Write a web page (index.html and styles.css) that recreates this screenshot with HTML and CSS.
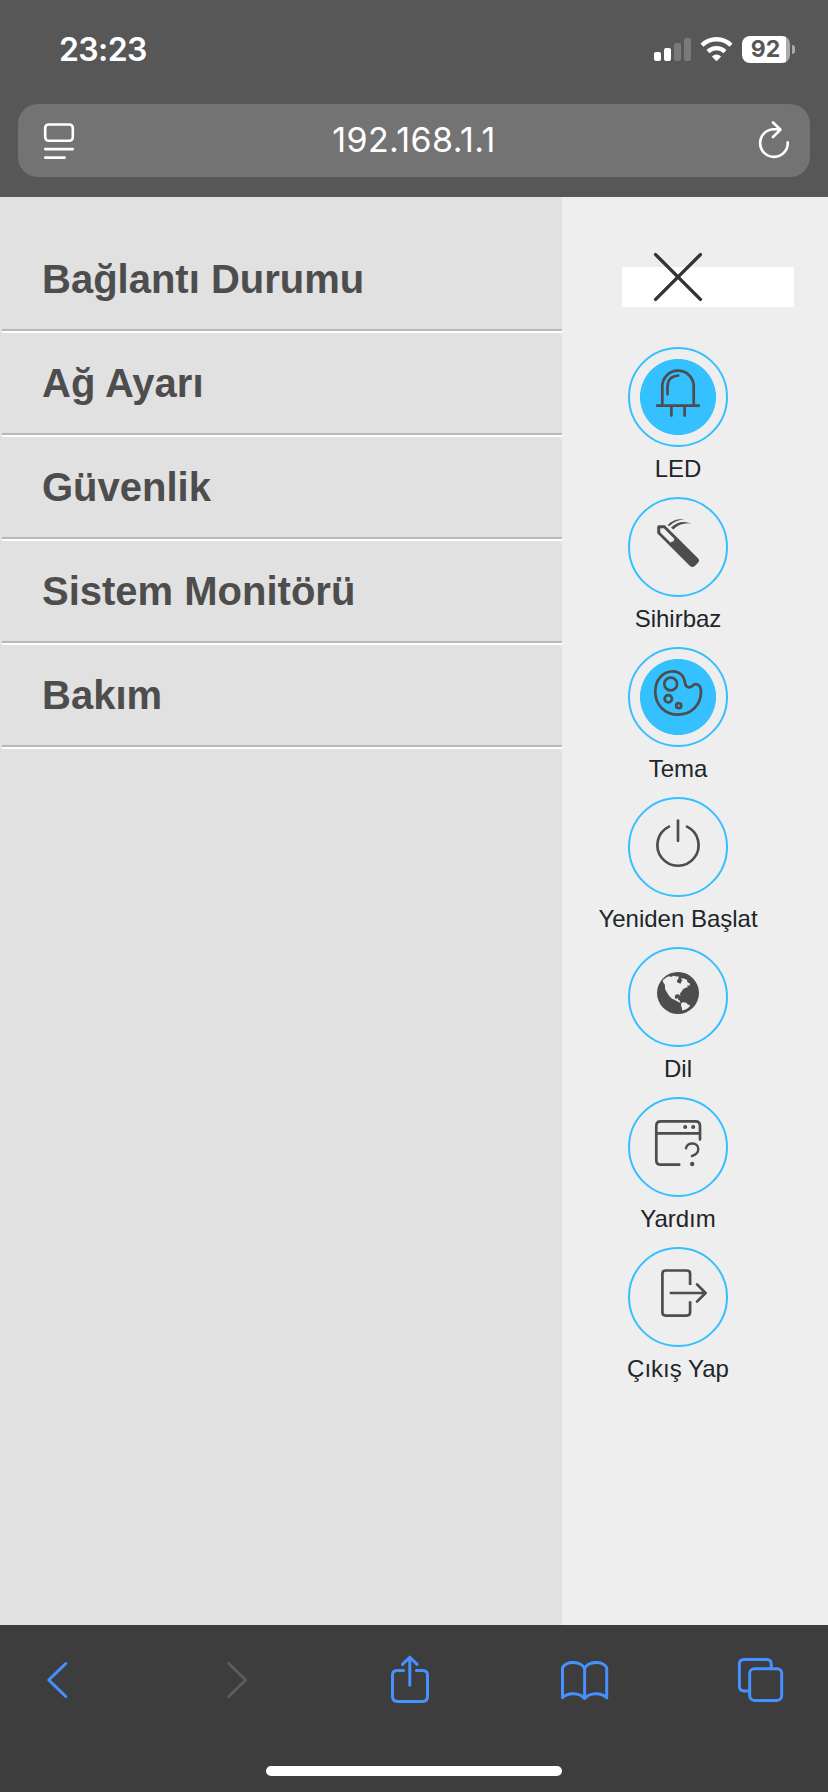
FILE: index.html
```
<!DOCTYPE html>
<html lang="tr">
<head>
    <meta charset="UTF-8">
    <title>192.168.1.1</title>
    <meta name="viewport" content="width=device-width, initial-scale=1">
    <link rel="stylesheet" href="styles.css">
</head>
<body>
<header class="browser-top">
    <div class="status-bar">
        <span class="clock">23:23</span>
        <div class="status-icons">
            <svg class="signal" viewBox="0 0 37 23">
                <rect x="0" y="14" width="7" height="9" rx="2"/>
                <rect x="10" y="10" width="7" height="13" rx="2"/>
                <rect class="weak" x="20" y="5" width="7" height="18" rx="2"/>
                <rect class="weak" x="30" y="0" width="7" height="23" rx="2"/>
            </svg>
            <svg class="wifi" viewBox="0 0 33 25">
                <path class="wave" d="M2 8.2A20.6 20.6 0 0 1 31 8.2"/>
                <path class="wave" d="M8 14.6A12.2 12.2 0 0 1 25 14.6"/>
                <path d="M11.8 19.6Q16.5 15.2 21.2 19.6L17.3 23.6Q16.5 24.4 15.7 23.6Z"/>
            </svg>
            <div class="battery"><span>92</span></div>
        </div>
    </div>
    <div class="url-bar">
        <svg class="reader" viewBox="0 0 30 42">
            <rect x="1.2" y="5.5" width="27.6" height="16.3" rx="3.5"/>
            <path d="M1.2 30.1h27.6M1.2 38.6h19.4"/>
        </svg>
        <span class="url">192.168.1.1</span>
        <svg class="reload" viewBox="0 0 30 42">
            <path d="M28.7 23.3A13.8 13.8 0 1 1 14.9 10.3H20.8M14 3.5L21.5 10.6L14 18"/>
        </svg>
    </div>
</header>

<main class="page">
    <nav class="menu">
        <a class="menu-item">Bağlantı Durumu</a>
        <a class="menu-item">Ağ Ayarı</a>
        <a class="menu-item">Güvenlik</a>
        <a class="menu-item">Sistem Monitörü</a>
        <a class="menu-item">Bakım</a>
    </nav>

    <aside class="side">
        <div class="close">
            <svg viewBox="0 0 50 50"><path d="M2.6 2.6L47.4 47.4M47.4 2.6L2.6 47.4"/></svg>
        </div>
        <div class="tool on">
            <div class="ring">
                <svg viewBox="2 2 96 96">
                    <path d="M34.3 58V39.3a15.7 15.7 0 0 1 31.4 0V58M29.2 58.7h41.6M43.4 59v9.6M56.6 59v9.6M39.5 47.3V40.5Q39.5 29.2 50.2 28.5"/>
                </svg>
            </div>
            <span>LED</span>
        </div>
        <div class="tool">
            <div class="ring">
                <svg viewBox="2 2 96 96">
                    <path class="solid" fill-rule="evenodd" d="M31 28.2H36.8L70 61.3Q72 63.5 70 65.7L66.8 69Q64.3 71 62 69L29.2 36.2V30.2Q29.2 28.2 31 28.2ZM32.3 31.3V35.5L42.7 45.7L43.9 44.6L45.4 44.8L45.6 43.2L46.5 42L35.8 31.3Z"/>
                    <path class="solid" d="M39.5 28.2Q46.5 21 56.5 22.6Q47.5 23 41.5 29Z"/>
                    <path class="solid" d="M43 30.5Q51.5 21.8 63.7 26.6Q52.5 25.2 45.3 32.5Z"/>
                </svg>
            </div>
            <span>Sihirbaz</span>
        </div>
        <div class="tool on">
            <div class="ring">
                <svg viewBox="2 2 96 96">
                    <path d="M45 24.3C34.5 24.3 27.3 33.2 27.3 44.7C27.3 58 37 67.7 50 67.7C63.5 67.7 73 57.5 73 45C73 37 67.6 35.9 64.5 38.7C61 41.8 57.6 40.2 57 35.8C56 29 51.5 24.3 45 24.3Z"/>
                    <circle cx="42.7" cy="37" r="6.4"/>
                    <circle cx="40.3" cy="51.8" r="3.7"/>
                    <circle cx="50.7" cy="58.7" r="2.5"/>
                </svg>
            </div>
            <span>Tema</span>
        </div>
        <div class="tool">
            <div class="ring">
                <svg viewBox="2 2 96 96">
                    <path d="M41 29.6A20.6 20.6 0 1 0 59 29.6M50 23.5V43.8"/>
                </svg>
            </div>
            <span>Yeniden Başlat</span>
        </div>
        <div class="tool">
            <div class="ring">
                <svg viewBox="2 2 96 96">
                    <circle class="solid" cx="50" cy="46" r="21"/>
                    <path class="land" d="M34.7 33.2L39 30L41.5 29.2L43 30L45.5 28.8L48.4 29.4L50.6 29.2L50.4 31.8L48.8 33.6L49.4 35.4L52.6 36.8L53.4 34.6L54.5 33.6L52.6 31.6L55.6 31.6L58.8 32.8L59.5 35.2L62.2 36.8L61.4 38.6L58.8 38.4L60 40L57 41L55 42.2L53.6 44.5L52 46.4L52.4 48.8L50.5 47.3L48 47.4L46.8 49L47 51.2L48.6 52L50.3 50.8L50 52.8L51.6 53.6L52.6 56L49.5 54.6L46 52.4L44 51.8L41.2 49L39.3 46L37.2 42.5L36.8 37.4L35.2 35.4Z"/>
                    <path class="land" d="M53.4 56L55 55.2L58.3 55.8L59.4 57.2L62.2 58.6L60.2 61L57 62.8L54.2 63.5L53.8 60.6L52.9 58.4Z"/>
                </svg>
            </div>
            <span>Dil</span>
        </div>
        <div class="tool">
            <div class="ring">
                <svg viewBox="2 2 96 96">
                    <path d="M72 42.4V28.8Q72 24.3 67.5 24.3H32.8Q28.3 24.3 28.3 28.8V63.2Q28.3 67.7 32.8 67.7H51.2M28.3 36.3H72"/>
                    <path class="mark" d="M58 51.3C59 44.6 70.3 44.8 70.3 52C70.3 56.3 67 58 64 59"/>
                    <circle class="solid" cx="57.2" cy="30" r="2"/>
                    <circle class="solid" cx="65.2" cy="30" r="2"/>
                    <circle class="solid" cx="64.2" cy="67" r="2.2"/>
                </svg>
            </div>
            <span>Yardım</span>
        </div>
        <div class="tool">
            <div class="ring">
                <svg viewBox="2 2 96 96">
                    <path class="door" d="M62.1 38V26.8Q62.1 23.5 58.8 23.5H37.7Q34.4 23.5 34.4 26.8V65.3Q34.4 68.6 37.7 68.6H58.8Q62.1 68.6 62.1 65.3V54.2"/>
                    <path d="M42.8 46H77.4M69 37.4L77.6 46L69 54.6"/>
                </svg>
            </div>
            <span>Çıkış Yap</span>
        </div>
    </aside>
</main>

<footer class="browser-bottom">
    <div class="toolbar">
        <svg viewBox="0 0 60 60"><path d="M35.8 13.5L18.8 30L35.8 46.5"/></svg>
        <svg class="disabled" viewBox="0 0 60 60"><path d="M23.7 13.5L40.7 30L23.7 46.5"/></svg>
        <svg viewBox="0 0 60 60">
            <path d="M23.6 20.5H17.3Q12.5 20.5 12.5 25.3V46.6Q12.5 51.4 17.3 51.4H42.7Q47.5 51.4 47.5 46.6V25.3Q47.5 20.5 42.7 20.5H36.4M29.8 35.3V7.5M22.5 14.4L29.8 7.2L37.1 14.4"/>
        </svg>
        <svg viewBox="0 0 60 60">
            <path d="M29.6 18.2C25 11 12 10.6 7.5 17.5V47.8C12.5 42.3 24.5 42.3 29.6 48.5C34.7 42.3 46.7 42.3 51.7 47.8V17.5C47.2 10.6 34.2 11 29.6 18.2ZM29.6 18.2V48.5"/>
        </svg>
        <svg viewBox="0 0 60 60">
            <path d="M41.2 18V14Q41.2 9.4 36.6 9.4H14Q9.4 9.4 9.4 14V36.3Q9.4 40.9 14 40.9H19"/>
            <rect x="19.7" y="18.7" width="32" height="31.7" rx="4.6"/>
        </svg>
    </div>
    <div class="home-bar"></div>
</footer>
</body>
</html>
```
FILE: styles.css
```
* {
    box-sizing: border-box;
}
body {
    margin: 0;
    height: 1792px;
    display: flex;
    flex-direction: column;
    font-family: "Liberation Sans", Arial, sans-serif;
    background: #eee;
}
svg {
    display: block;
    flex: none;
    overflow: visible;
    fill: none;
    stroke-linecap: round;
    stroke-linejoin: round;
}

/* browser top */
.browser-top {
    height: 197px;
    padding: 0 18px;
    background: #575757;
    color: #fff;
    font-family: Inter, sans-serif;
}
.status-bar {
    height: 104px;
    padding: 0 15px 5px 41px;
    display: flex;
    justify-content: space-between;
    align-items: center;
}
.clock {
    font-size: 32px;
    font-weight: 600;
    letter-spacing: -0.6px;
}
.status-icons {
    display: flex;
    align-items: center;
}
.signal {
    width: 37px;
    height: 23px;
    margin-right: 9px;
    fill: #fff;
}
.signal .weak {
    fill: #797979;
}
.wifi {
    width: 33px;
    height: 25px;
    margin-right: 9px;
    fill: #fff;
}
.wifi .wave {
    fill: none;
    stroke: #fff;
    stroke-width: 4.4;
    stroke-linecap: butt;
}
.battery {
    position: relative;
    width: 48px;
    height: 27px;
    margin-right: 5px;
    padding-right: 1px;
    border-radius: 8px;
    background: linear-gradient(to right, #fff 44px, #aaa 44px);
    color: #575757;
    font-size: 23px;
    font-weight: 700;
    line-height: 27px;
    text-align: center;
}
.battery::after {
    content: "";
    position: absolute;
    left: 50px;
    top: 9px;
    width: 3px;
    height: 9px;
    border-radius: 0 4px 4px 0;
    background: #aaa;
}
.url-bar {
    height: 73px;
    padding: 0 21px 2px 26px;
    display: flex;
    align-items: center;
    border-radius: 20px;
    background: #737373;
}
.url-bar svg {
    width: 30px;
    height: 42px;
    stroke: #fff;
    stroke-width: 2.6;
}
.url {
    flex: 1;
    margin-right: 5px;
    font-size: 34px;
    letter-spacing: 0.4px;
    text-align: center;
}

/* page */
.page {
    height: 1428px;
    display: flex;
}
.menu {
    width: 562px;
    padding: 32px 0 0 2px;
    background: #e1e1e1;
}
.menu-item {
    display: block;
    height: 104px;
    padding-left: 40px;
    border-bottom: 2px solid #fff;
    box-shadow: inset 0 -2px 0 #b9b9b9;
    color: #4d4d4d;
    font-size: 40px;
    font-weight: 700;
    line-height: 100px;
}
.side {
    width: 232px;
    padding-top: 70px;
}
.close {
    width: 172px;
    height: 40px;
    margin: 0 0 40px 60px;
    padding-left: 31px;
    background: #fff;
}
.close svg {
    width: 50px;
    height: 50px;
    transform: translateY(-15px);
    stroke: #333;
    stroke-width: 3.4;
}
.tool {
    height: 150px;
    display: flex;
    flex-direction: column;
    align-items: center;
    color: #212529;
    font-size: 24px;
    line-height: 36px;
}
.tool span {
    margin-top: 4px;
}
.ring {
    width: 100px;
    height: 100px;
    border: 2px solid #35c0ff;
    border-radius: 50%;
}
.on .ring {
    background: radial-gradient(circle, #35c0ff 37.6px, transparent 38.4px);
}
.ring svg {
    width: 96px;
    height: 96px;
    stroke: #4d4d4d;
    stroke-width: 2.7;
}
.ring .solid {
    fill: #4d4d4d;
    stroke: none;
}
.ring .land {
    fill: #eee;
    stroke: none;
}
.ring .mark {
    stroke-width: 2.4;
}
.ring .door {
    stroke-linecap: butt;
}

/* browser bottom */
.browser-bottom {
    height: 167px;
    background: #3d3d3d;
}
.toolbar {
    height: 141px;
    padding: 25px 38px 0 30px;
    display: flex;
    justify-content: space-between;
}
.toolbar svg {
    width: 60px;
    height: 60px;
    stroke: #4690ff;
    stroke-width: 3;
}
.toolbar .disabled {
    stroke: #5c5c5c;
}
.home-bar {
    width: 296px;
    height: 10px;
    margin: 0 auto;
    border-radius: 5px;
    background: #fff;
}
```
